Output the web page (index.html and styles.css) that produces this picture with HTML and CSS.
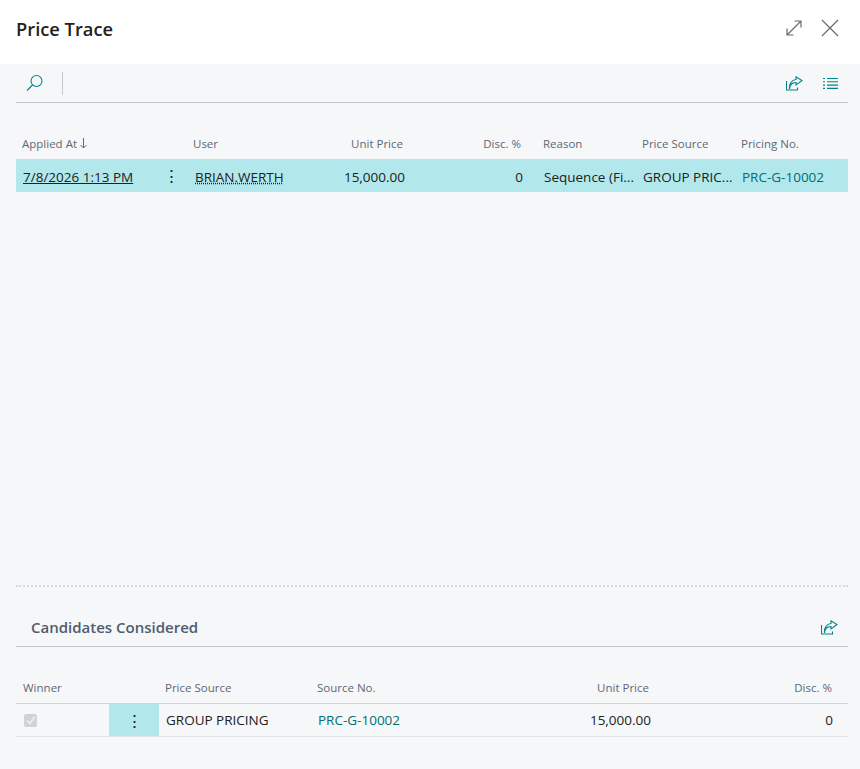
FILE: index.html
```html
<!DOCTYPE html>
<html lang="en">

<head>
    <meta charset="UTF-8">
    <title>Price Trace</title>
    <link rel="stylesheet" href="styles.css">
</head>

<body>
    <div class="dialog">
        <div class="titleBar">
            <h1>Price Trace</h1>
            <div class="windowButtons">
                <svg width="16" height="16" viewBox="0 0 16 16" class="greyIcon">
                    <path d="M1 15L15 1M8.500 1H15v6.500M1 8.500V15h6.500" />
                </svg>
                <svg width="18" height="18" viewBox="0 0 18 18" class="greyIcon">
                    <path d="M1 1l16 16M17 1L1 17" />
                </svg>
            </div>
        </div>

        <div class="content">
            <div class="toolbar">
                <svg width="18" height="18" viewBox="0 0 18 18" class="tealIcon searchIcon">
                    <circle cx="10.500" cy="7" r="5.500" />
                    <path d="M6.500 11L1 16.500" />
                </svg>
                <div class="toolbarLine"></div>
                <div class="toolbarRight">
                    <svg width="17" height="15" viewBox="0 0 17 15" class="tealIcon">
                        <path d="M.5 5v9h11v-2.500M3.500 13c0-4 2.500-6.500 6.500-6.500V9l6-4.500L10 .8v2.700C6 3.800 3 7.500 3.500 13z" />
                    </svg>
                    <svg width="15" height="11" viewBox="0 0 15 11" class="tealIcon">
                        <path d="M0 .5h2M4 .5h11M0 3.800h2M4 3.800h11M0 7.100h2M4 7.100h11M0 10.400h2M4 10.400h11" />
                    </svg>
                </div>
            </div>

            <div class="mainList">
                <div class="traceGrid headRow">
                    <div class="sortHead">Applied At
                        <svg width="7" height="11" viewBox="0 0 7 11" class="sortArrow">
                            <path d="M3.500 0v10M.5 7l3 3 3-3" />
                        </svg>
                    </div>
                    <div></div>
                    <div class="userHead">User</div>
                    <div class="right">Unit Price</div>
                    <div class="right disc">Disc. %</div>
                    <div>Reason</div>
                    <div>Price Source</div>
                    <div>Pricing No.</div>
                </div>
                <div class="traceGrid dataRow selected">
                    <div><a href="#" class="rowLink">7/8/2026 1:13 PM</a></div>
                    <div class="dots">&#8942;</div>
                    <div><span class="dotted">BRIAN.WERTH</span></div>
                    <div class="right">15,000.00</div>
                    <div class="right disc">0</div>
                    <div>Sequence (Fi...</div>
                    <div>GROUP PRIC...</div>
                    <div class="teal">PRC-G-10002</div>
                </div>
            </div>

            <div class="splitter"></div>

            <div class="sectionHead">
                <h2>Candidates Considered</h2>
                <svg width="17" height="15" viewBox="0 0 17 15" class="tealIcon">
                    <path d="M.5 5v9h11v-2.500M3.500 13c0-4 2.500-6.500 6.500-6.500V9l6-4.500L10 .8v2.700C6 3.800 3 7.500 3.500 13z" />
                </svg>
            </div>

            <div class="candidateGrid headRow lower">
                <div class="firstCol">Winner</div>
                <div></div>
                <div>Price Source</div>
                <div>Source No.</div>
                <div class="right">Unit Price</div>
                <div class="right lastCol">Disc. %</div>
            </div>
            <div class="candidateGrid dataRow lowerRow">
                <div class="checkCell">
                    <span class="checkBox">
                        <svg width="10" height="10" viewBox="0 0 10 10">
                            <path d="M1 5.500L3.800 8.500L9 1.500" />
                        </svg>
                    </span>
                </div>
                <div class="dots dotsCell">&#8942;</div>
                <div>GROUP PRICING</div>
                <div class="teal">PRC-G-10002</div>
                <div class="right">15,000.00</div>
                <div class="right lastCol">0</div>
            </div>
        </div>
    </div>
</body>

</html>
```

FILE: styles.css
```css
body {
    margin: 0;
    background-color: #f6f7f9;
    font-family: "Open Sans", "Liberation Sans", sans-serif;
    font-size: 13.5px;
    color: #212121;
}

.dialog {
    height: 769px;
    display: flex;
    flex-direction: column;
    overflow: hidden;
}

.titleBar {
    height: 64px;
    flex: none;
    background-color: #fff;
    display: flex;
    align-items: center;
    justify-content: space-between;
    padding: 0 21px 8px 16px;
    box-sizing: border-box;
}

h1 {
    margin: 0;
    font-size: 18.3px;
    font-weight: 600;
    color: #212121;
}

.windowButtons {
    display: flex;
    align-items: center;
    gap: 19px;
}

.greyIcon {
    fill: none;
    stroke: #6b6b6b;
    stroke-width: 1.2;
}

.tealIcon {
    fill: none;
    stroke: #00858c;
    stroke-width: 1.1;
}

.content {
    flex: 1;
    display: flex;
    flex-direction: column;
    padding: 0 12px 0 16px;
}

.toolbar {
    height: 38px;
    flex: none;
    display: flex;
    align-items: center;
    border-bottom: 1px solid #c8c8cc;
}

.searchIcon {
    margin-left: 10px;
}

.toolbarLine {
    width: 1px;
    height: 23px;
    margin-left: 18px;
    background-color: #c8c8cc;
}

.toolbarRight {
    margin-left: auto;
    display: flex;
    align-items: center;
    gap: 20px;
    padding-right: 10px;
}

.mainList {
    flex: 1;
    padding-top: 30px;
}

.traceGrid {
    display: grid;
    grid-template-columns: 140px 32px 112px 110px 127px 99px 99px 113px;
}

.candidateGrid {
    display: grid;
    grid-template-columns: 93px 50px 152px 140px 205px 192px;
}

.headRow {
    height: 26px;
    align-items: center;
    font-size: 11.5px;
    color: #5d6875;
    white-space: nowrap;
    padding-bottom: 5px;
    box-sizing: border-box;
}

.headRow>div {
    padding: 0 7px 0 6px;
}

.headRow>.userHead {
    padding-left: 5px;
}

.headRow>.firstCol {
    padding-left: 7px;
}

.sortHead {
    display: flex;
    align-items: center;
    gap: 3px;
}

.sortArrow {
    fill: none;
    stroke: #5d6875;
    stroke-width: 1;
}

.dataRow {
    height: 33px;
    align-items: center;
    white-space: nowrap;
}

.dataRow>div {
    padding: 0 5px 0 7px;
}

.traceGrid.dataRow>div {
    padding-top: 2px;
}

.selected {
    background-color: #b2e8ec;
}

.right {
    text-align: right;
}

.headRow>.disc {
    padding-right: 16px;
}

.dataRow>.disc {
    padding-right: 14px;
}

.headRow>.lastCol {
    padding-right: 16px;
}

.dataRow>.lastCol {
    padding-right: 15px;
}

.rowLink {
    color: #212121;
}

.dotted {
    text-decoration: underline dotted;
}

.teal {
    color: #006e75;
}

.dots {
    font-size: 17px;
    text-align: center;
    line-height: 1;
}

.traceGrid.dataRow>.dots {
    padding: 0 2px 0 0;
}

.splitter {
    height: 0;
    border-top: 2px dotted #d5d8dc;
    margin-bottom: 21px;
}

.sectionHead {
    height: 38px;
    flex: none;
    display: flex;
    align-items: center;
    justify-content: space-between;
    padding: 0 10px 0 15px;
    border-bottom: 1px solid #c8c8cc;
}

h2 {
    margin: 0;
    font-size: 15px;
    font-weight: 600;
    color: #505c6d;
}

.lower {
    margin-top: 30px;
    border-bottom: 1px solid #d2d4d8;
    height: 27px;
}

.lowerRow {
    height: 32px;
    border-bottom: 1px solid #e0e2e5;
    margin-bottom: 32px;
    align-items: stretch;
}

.lowerRow>div {
    display: flex;
    align-items: center;
}

.lowerRow>.checkCell {
    padding-left: 8px;
}

.lowerRow>.right {
    justify-content: flex-end;
}

.lowerRow>.dotsCell {
    background-color: #b2e8ec;
    justify-content: center;
    padding: 0;
}

.checkBox {
    width: 13px;
    height: 13px;
    background-color: #d2d2d2;
    border-radius: 2px;
    display: flex;
    align-items: center;
    justify-content: center;
}

.checkBox svg {
    fill: none;
    stroke: #eee;
    stroke-width: 1.6;
}
```
